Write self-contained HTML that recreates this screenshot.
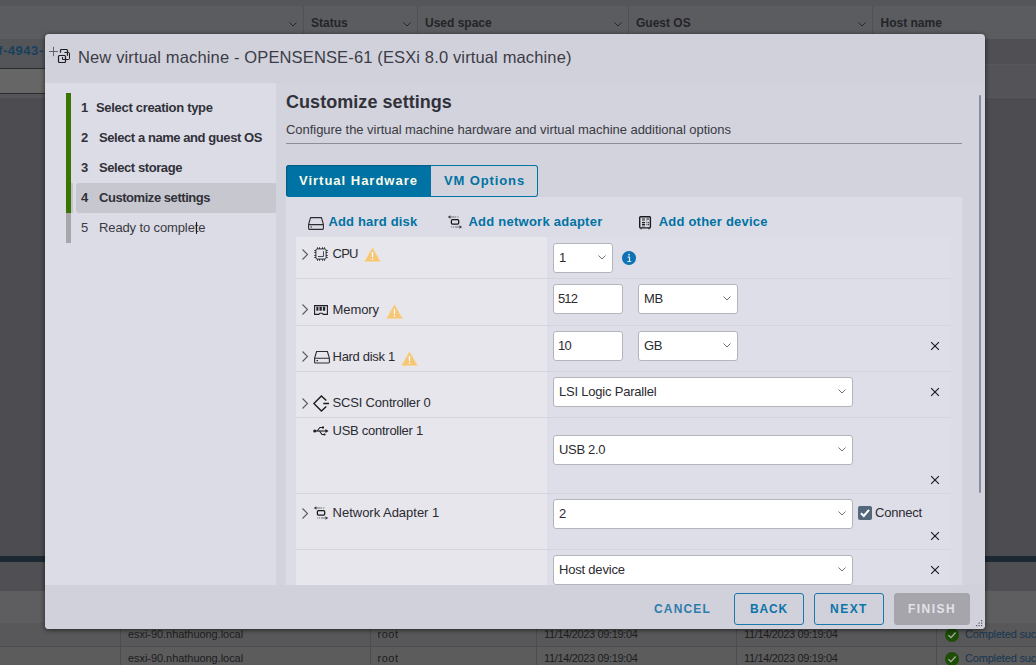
<!DOCTYPE html>
<html lang="en">
<head>
<meta charset="utf-8">
<title>New virtual machine - OPENSENSE-61</title>
<style>
*{box-sizing:border-box;margin:0;padding:0}
html,body{width:1036px;height:665px;overflow:hidden}
body{position:relative;background:#4d4d51;font-family:"Liberation Sans",sans-serif;font-size:13px;color:#2b2b31}
.abs,.abs>*{position:absolute}
.t{position:absolute;white-space:pre;line-height:16px}
/* ---------- background page (dimmed) ---------- */
#bg{position:absolute;left:0;top:0;width:1036px;height:665px}
#bg div{position:absolute}
.bgth{font-weight:700;font-size:12px;color:#232428;letter-spacing:0}
.bgtd{font-size:11px;color:#1d1d20;letter-spacing:-.05px}
/* ---------- modal ---------- */
#modal{position:absolute;left:45px;top:34px;width:940px;height:595px;background:#d1d1db;border-radius:4px;box-shadow:0 1px 5px rgba(0,0,0,.6);overflow:hidden}
#modal>div{position:absolute}
#sidebar{left:0;top:49px;width:231px;height:502px;background:#dcdce6}
#content{left:231px;top:49px;width:709px;height:502px;background:#d3d3dd}
#panel{left:241px;top:163px;width:676px;height:388px;background:#dcdce6}
#tbl{position:absolute;left:251px;top:203px;width:655px;height:348px;background:#dedee8;overflow:hidden}
#tbl .lc{position:absolute;left:0;top:0;width:251px;height:348px;background:#e6e6ec}
#tbl .ln{position:absolute;left:0;width:655px;height:1px;background:#d5d5de}
.inp{position:absolute;height:30px;background:#fff;border:1px solid #b4b4bb;border-radius:3px;font-size:13px;line-height:28px;padding-left:5px;color:#2b2b31;white-space:pre}
.chev{position:absolute;width:8px;height:5px}
.x{position:absolute;width:8px;height:8px}
.btn{position:absolute;top:559px;height:32px;border:1px solid #1a78ab;border-radius:3px;color:#0c74a8;font-weight:700;font-size:12px;line-height:30px;text-align:center;white-space:pre}
svg{position:absolute;overflow:visible}
</style>
</head>
<body>

<!-- ================= dimmed page behind the dialog ================= -->
<div id="bg">
  <div style="left:0;top:0;width:1036px;height:6px;background:#55565a"></div>
  <div style="left:0;top:6px;width:1036px;height:33px;background:#5b5c60"></div>
  <div style="left:303px;top:6px;width:1px;height:33px;background:#505155"></div>
  <div style="left:417px;top:6px;width:1px;height:33px;background:#505155"></div>
  <div style="left:628px;top:6px;width:1px;height:33px;background:#505155"></div>
  <div style="left:872px;top:6px;width:1px;height:33px;background:#505155"></div>
  <div class="t bgth" style="left:311px;top:15px">Status</div>
  <div class="t bgth" style="left:425px;top:15px">Used space</div>
  <div class="t bgth" style="left:636px;top:15px">Guest OS</div>
  <div class="t bgth" style="left:880.500px;top:15px">Host name</div>
  <svg style="left:289px;top:22px" width="8" height="5" viewBox="0 0 8 5"><path d="M.5.5 4 4 7.5.5" fill="none" stroke="#26272b" stroke-width="1"/></svg>
  <svg style="left:403px;top:22px" width="8" height="5" viewBox="0 0 8 5"><path d="M.5.5 4 4 7.5.5" fill="none" stroke="#26272b" stroke-width="1"/></svg>
  <svg style="left:614px;top:22px" width="8" height="5" viewBox="0 0 8 5"><path d="M.5.5 4 4 7.5.5" fill="none" stroke="#26272b" stroke-width="1"/></svg>
  <svg style="left:858px;top:22px" width="8" height="5" viewBox="0 0 8 5"><path d="M.5.5 4 4 7.5.5" fill="none" stroke="#26272b" stroke-width="1"/></svg>

  <div style="left:0;top:39px;width:1036px;height:25px;background:#4f4f54"></div>
  <div style="left:0;top:64px;width:1036px;height:34px;background:#535358"></div>
  <div style="left:0;top:64px;width:1036px;height:1px;background:#57575b"></div>
  <div style="left:0;top:97px;width:1036px;height:1px;background:#58585c"></div>
  <div style="left:0;top:98px;width:1036px;height:458px;background:#4d4d51"></div>
  <div style="left:0;top:39px;width:45px;height:29px;background:#545559"></div>
  <div class="t" style="left:-2px;top:43px;font-weight:700;font-size:13px;color:#17405e;letter-spacing:.55px">f-4943-</div>
  <div style="left:0;top:68px;width:45px;height:1px;background:#2b2b2f"></div>
  <div style="left:0;top:69px;width:45px;height:24px;background:#666667"></div>
  <div style="left:0;top:93px;width:45px;height:1px;background:#2b2b2f"></div>
  <div style="left:0;top:94px;width:45px;height:462px;background:#4d4d51"></div>
  <div style="left:0;top:94px;width:45px;height:4px;background:#56565a"></div>

  <div style="left:0;top:556px;width:1036px;height:6px;background:#1c2932"></div>
  <div style="left:0;top:562px;width:1036px;height:29px;background:#4f4f54"></div>
  <div style="left:0;top:591px;width:1036px;height:32px;background:#5e5e60"></div>
  <div style="left:0;top:623px;width:1036px;height:23px;background:#58585a"></div>
  <div style="left:0;top:646.500px;width:1036px;height:19px;background:#5c5c5d"></div>
  <div style="left:120px;top:623px;width:1px;height:42px;background:#4c4c4e"></div>
  <div style="left:370px;top:623px;width:1px;height:42px;background:#4c4c4e"></div>
  <div style="left:536px;top:623px;width:1px;height:42px;background:#4c4c4e"></div>
  <div style="left:736px;top:623px;width:1px;height:42px;background:#4c4c4e"></div>
  <div style="left:936px;top:623px;width:1px;height:42px;background:#4c4c4e"></div>
  <div class="t bgtd" style="left:128px;top:626px">esxi-90.nhathuong.local</div>
  <div class="t bgtd" style="left:128px;top:650px">esxi-90.nhathuong.local</div>
  <div class="t bgtd" style="left:377.500px;top:626px;letter-spacing:.5px">root</div>
  <div class="t bgtd" style="left:377.500px;top:650px;letter-spacing:.5px">root</div>
  <div class="t bgtd" style="left:544px;top:626px;letter-spacing:-.35px">11/14/2023 09:19:04</div>
  <div class="t bgtd" style="left:544px;top:650px;letter-spacing:-.35px">11/14/2023 09:19:04</div>
  <div class="t bgtd" style="left:744px;top:626px;letter-spacing:-.35px">11/14/2023 09:19:04</div>
  <div class="t bgtd" style="left:744px;top:650px;letter-spacing:-.35px">11/14/2023 09:19:04</div>
  <svg style="left:945px;top:628px" width="14" height="14" viewBox="0 0 14 14"><circle cx="7" cy="7" r="7" fill="#1d4d06"/><path d="M3.400 7.200 6 9.700 10.600 4.500" fill="none" stroke="#a9b3a6" stroke-width="1.200"/></svg>
  <svg style="left:945px;top:652px" width="14" height="14" viewBox="0 0 14 14"><circle cx="7" cy="7" r="7" fill="#1d4d06"/><path d="M3.400 7.200 6 9.700 10.600 4.500" fill="none" stroke="#a9b3a6" stroke-width="1.200"/></svg>
  <div class="t bgtd" style="left:965px;top:626px;color:#173650;letter-spacing:-.18px">Completed successfully</div>
  <div class="t bgtd" style="left:965px;top:650px;color:#173650;letter-spacing:-.18px">Completed successfully</div>
</div>

<!-- ================= wizard dialog ================= -->
<div id="modal">
  <!-- header -->
  <svg style="left:4px;top:12px" width="32" height="22" viewBox="0 0 32 22"><g fill="none" stroke="#1d1d23" stroke-width="1.200"><path d="M0 5.500h9M4.500.800v9.400" stroke="#55555d" stroke-width=".9"/><path d="M11.500 6.800V4.400a.9.900 0 0 1 .9-.9h5.200a.9.900 0 0 1 .9.900v5.400"/><path d="M15.400 6.500h4.300a.8.800 0 0 1 .8.800v5.400a.8.800 0 0 1-.8.800h-2.700" stroke-width="1"/><rect x="9.500" y="9.500" width="7" height="7" rx=".9"/><path d="M13.500 11v2.500h2.500" stroke-width="1"/></g></svg>
  <div class="t" style="left:33px;top:12px;font-size:16.5px;line-height:22px;color:#3c3c46;letter-spacing:.14px">New virtual machine - OPENSENSE-61 (ESXi 8.0 virtual machine)</div>

  <!-- step navigation -->
  <div id="sidebar">
    <div style="position:absolute;left:21px;top:10px;width:5px;height:120px;background:#3b7500"></div>
    <div style="position:absolute;left:21px;top:130px;width:5px;height:30px;background:#a6a6ac"></div>
    <div style="position:absolute;left:26px;top:100px;width:2px;height:30px;background:#c4c4cc"></div>
    <div style="position:absolute;left:31px;top:100px;width:200px;height:30px;background:#c7c7cf;border-radius:3px 0 0 3px"></div>
    <div class="t" style="left:36px;top:17px;font-weight:700;color:#313139;letter-spacing:-.3px">1</div>
    <div class="t" style="left:51px;top:17px;font-weight:700;color:#313139;letter-spacing:-.31px">Select creation type</div>
    <div class="t" style="left:36px;top:47px;font-weight:700;color:#313139">2</div>
    <div class="t" style="left:54px;top:47px;font-weight:700;color:#313139;letter-spacing:-.43px">Select a name and guest OS</div>
    <div class="t" style="left:36px;top:77px;font-weight:700;color:#313139">3</div>
    <div class="t" style="left:54px;top:77px;font-weight:700;color:#313139;letter-spacing:-.42px">Select storage</div>
    <div class="t" style="left:36px;top:107px;font-weight:700;color:#313139">4</div>
    <div class="t" style="left:54px;top:107px;font-weight:700;color:#313139;letter-spacing:-.45px">Customize settings</div>
    <div class="t" style="left:36px;top:137px;color:#3a3a42">5</div>
    <div class="t" style="left:54px;top:137px;color:#3a3a42;letter-spacing:-.12px">Ready to complete</div>
    <div style="position:absolute;left:150.500px;top:139px;width:1px;height:12px;background:#1a1a1e"></div>
  </div>

  <!-- main content -->
  <div id="content"></div>
  <div class="t" style="left:241px;top:57px;font-size:18px;line-height:22px;font-weight:700;color:#313139;letter-spacing:.05px">Customize settings</div>
  <div class="t" style="left:241px;top:87.500px;color:#3a3a42;letter-spacing:-.04px">Configure the virtual machine hardware and virtual machine additional options</div>
  <div style="left:241px;top:109px;width:676px;height:1px;background:#8e8e98"></div>

  <!-- tabs -->
  <div style="left:241px;top:131px;width:145px;height:32px;background:#0072a3;border-radius:3px 0 0 3px;box-shadow:inset 1px 1px 1px rgba(0,45,75,.35)"></div>
  <div class="t" style="left:254px;top:139px;font-weight:700;color:#fbfbe9;letter-spacing:.99px">Virtual Hardware</div>
  <div style="left:386px;top:131px;width:107px;height:32px;border:1px solid #0072a3;border-left:0;border-radius:0 3px 3px 0"></div>
  <div class="t" style="left:399px;top:139px;font-weight:700;color:#0072a3;letter-spacing:.88px">VM Options</div>

  <div id="panel"></div>

  <!-- toolbar -->
  <svg style="left:263px;top:183px" width="16" height="13" viewBox="0 0 16 13"><path d="M2.600.600h10.800l2 6.800v4.200a.800.800 0 0 1-.8.800H1.400a.800.800 0 0 1-.8-.8V7.400zM.800 7.600h14.400M2.500 10h1.500" fill="none" stroke="#2b2b31" stroke-width="1.100"/></svg>
  <div class="t" style="left:283.400px;top:180px;font-weight:700;color:#0072a3;letter-spacing:.18px">Add hard disk</div>
  <svg style="left:402px;top:181px" width="16" height="14" viewBox="0 0 16 14"><g fill="none"><path d="M3.500 2h4.200" stroke="#6e6e76" stroke-width="1"/><path d="M8 2h4" stroke="#6e6e76" stroke-width="1" stroke-dasharray="1 .8"/><path d="M.800 2l2.700-1.700v3.400z" fill="#3a3a42"/><rect x="4.400" y="4.700" width="7.300" height="4.400" rx="1.100" stroke="#16161a" stroke-width="1.250"/><path d="M8.200 12h4.300" stroke="#6e6e76" stroke-width="1"/><path d="M4.200 12h4" stroke="#6e6e76" stroke-width="1" stroke-dasharray="1 .8"/><path d="M15.200 12l-2.700-1.700v3.400z" fill="#3a3a42"/></g></svg>
  <div class="t" style="left:423.400px;top:180px;font-weight:700;color:#0072a3;letter-spacing:.25px">Add network adapter</div>
  <svg style="left:594px;top:182px" width="12" height="14" viewBox="0 0 12 14"><g fill="none" stroke="#1b1b1f"><rect x=".700" y=".700" width="10.700" height="11.200" rx=".800" stroke-width="1.400"/><path d="M2.200 12.300v1M9.900 12.300v1" stroke-width="1.400"/><path d="M3 3h3M7.400 3h2.600" stroke-width="1.100"/><path d="M3 4.600h3M3 10.200h3M7.800 4.400v1" stroke="#77777f" stroke-width="1"/><path d="M3 6.600h3M3 8.600h3" stroke-width="1.300"/><path d="M7.400 6.600h1M9 6.600h1M7.400 8.600h1M9 8.600h1" stroke="#3a3a42" stroke-width="1.100"/></g></svg>
  <div class="t" style="left:613.700px;top:180px;font-weight:700;color:#0072a3;letter-spacing:.22px">Add other device</div>

  <!-- hardware table -->
  <div id="tbl">
    <div class="lc"></div>
    <div class="ln" style="top:41px"></div>
    <div class="ln" style="top:88px"></div>
    <div class="ln" style="top:134px"></div>
    <div class="ln" style="top:180px"></div>
    <div class="ln" style="top:256px"></div>
    <div class="ln" style="top:312px"></div>
  </div>
  <div id="rows" style="left:0;top:0">
    <!-- CPU -->
    <svg style="left:257px;top:215px" width="6" height="11" viewBox="0 0 6 11"><path d="M.5.5 5.500 5.500.5 10.500" fill="none" stroke="#5a5a64" stroke-width="1.1"/></svg>
    <svg style="left:269px;top:213px" width="14" height="14" viewBox="0 0 14 14"><g fill="none" stroke="#2b2b31" stroke-width="1"><rect x="1.900" y="1.900" width="10.200" height="10.200" rx="1.500"/><path d="M3.500.300v1.600M5.500.300v1.600M8.500.300v1.600M10.500.300v1.600M3.500 12.100v1.600M5.500 12.100v1.600M8.500 12.100v1.600M10.500 12.100v1.600M.300 3.500h1.600M.300 5.500h1.600M.300 8.500h1.600M.300 10.500h1.600M12.100 3.500h1.600M12.100 5.500h1.600M12.100 8.500h1.600M12.100 10.500h1.600"/><path d="M4 9.500h5.500V4.200" stroke="#4a4a52"/></g></svg>
    <div class="t" style="left:287.6px;top:212px;letter-spacing:-.78px">CPU</div>
    <svg class="warn" style="left:319px;top:212.700px" width="17" height="15" viewBox="0 0 17 15"><path d="M8.500.8 16.300 14.400H.7z" fill="#f4c676" stroke="#f7d596" stroke-width=".8" stroke-linejoin="round"/><path d="M8.500 5v5M8.500 11.300v1.400" stroke="#fff" stroke-width="1.300"/></svg>
    <div class="inp" style="left:508px;top:209px;width:60px">1</div>
    <svg class="chev" style="left:553px;top:220.6px" viewBox="0 0 8 5"><path d="M.5.5 4 4 7.500.5" fill="none" stroke="#6e6e76" stroke-width="1"/></svg>
    <svg style="left:577px;top:216.500px" width="14" height="14" viewBox="0 0 14 14"><circle cx="7" cy="7" r="7" fill="#0f72b5"/><path d="M5.600 6.200h1.900v4.200M5.300 10.500h3.900" fill="none" stroke="#d3e6f3" stroke-width="1.200"/><circle cx="7" cy="3.700" r=".9" fill="#d3e6f3"/></svg>

    <!-- Memory -->
    <svg style="left:257px;top:270px" width="6" height="11" viewBox="0 0 6 11"><path d="M.5.5 5.500 5.500.5 10.500" fill="none" stroke="#5a5a64" stroke-width="1.1"/></svg>
    <svg style="left:269px;top:271px" width="14" height="10" viewBox="0 0 14 10"><path d="M.600.600h12.800v8.800H9.200l-1-1.200H5.800l-1 1.200H.6z" fill="none" stroke="#1f1f25" stroke-width="1.100"/><path d="M2.400 1.700h2v4h-2zM5.500 1.700h2.300v4H5.500zM8.900 1.700h2.300v4H8.900z" fill="#1f1f25"/></svg>
    <div class="t" style="left:287.6px;top:268px;letter-spacing:-.09px">Memory</div>
    <svg class="warn" style="left:341px;top:269.700px" width="17" height="15" viewBox="0 0 17 15"><path d="M8.500.8 16.300 14.400H.7z" fill="#f4c676" stroke="#f7d596" stroke-width=".8" stroke-linejoin="round"/><path d="M8.500 5v5M8.500 11.300v1.400" stroke="#fff" stroke-width="1.300"/></svg>
    <div class="inp" style="left:508px;top:250px;width:70px;padding-left:4px;letter-spacing:-.9px">512</div>
    <div class="inp" style="left:593px;top:250px;width:100px;letter-spacing:-.4px">MB</div>
    <svg class="chev" style="left:678px;top:261.6px" viewBox="0 0 8 5"><path d="M.5.5 4 4 7.500.5" fill="none" stroke="#6e6e76" stroke-width="1"/></svg>

    <!-- Hard disk 1 -->
    <svg style="left:257px;top:317px" width="6" height="11" viewBox="0 0 6 11"><path d="M.5.5 5.500 5.500.5 10.500" fill="none" stroke="#5a5a64" stroke-width="1.1"/></svg>
    <svg style="left:269px;top:317px" width="16" height="12.500" viewBox="0 0 16 13" preserveAspectRatio="none"><path d="M2.600.600h10.800l2 6.800v4.200a.800.800 0 0 1-.8.800H1.400a.800.800 0 0 1-.8-.8V7.400zM.800 7.600h14.400M2.500 10h1.500" fill="none" stroke="#2b2b31" stroke-width="1.100"/></svg>
    <div class="t" style="left:287.6px;top:315px;letter-spacing:-.32px">Hard disk 1</div>
    <svg class="warn" style="left:356px;top:316.700px" width="17" height="15" viewBox="0 0 17 15"><path d="M8.500.8 16.300 14.400H.7z" fill="#f4c676" stroke="#f7d596" stroke-width=".8" stroke-linejoin="round"/><path d="M8.500 5v5M8.500 11.300v1.400" stroke="#fff" stroke-width="1.300"/></svg>
    <div class="inp" style="left:508px;top:297px;width:70px;padding-left:4px;letter-spacing:-.85px">10</div>
    <div class="inp" style="left:593px;top:297px;width:100px;letter-spacing:-.4px">GB</div>
    <svg class="chev" style="left:678px;top:308.6px" viewBox="0 0 8 5"><path d="M.5.5 4 4 7.500.5" fill="none" stroke="#6e6e76" stroke-width="1"/></svg>
    <svg class="x" style="left:886px;top:308px" viewBox="0 0 8 8"><path d="M.100.100l7.800 7.800M7.900.100l-7.800 7.800" stroke="#1d1d22" stroke-width="1.150"/></svg>

    <!-- SCSI Controller 0 -->
    <svg style="left:257px;top:364px" width="6" height="11" viewBox="0 0 6 11"><path d="M.5.5 5.500 5.500.5 10.500" fill="none" stroke="#5a5a64" stroke-width="1.1"/></svg>
    <svg style="left:268px;top:361px" width="16" height="17" viewBox="0 0 16 17"><path d="M13.300 5.600 8.400.9.900 8.500 8.400 16.100l4.900-4.700M10.300 8.500H16" fill="none" stroke="#1b1b1f" stroke-width="1.400"/></svg>
    <div class="t" style="left:287.6px;top:361px;letter-spacing:-.19px">SCSI Controller 0</div>
    <div class="inp" style="left:508px;top:343px;width:300px;letter-spacing:-.21px">LSI Logic Parallel</div>
    <svg class="chev" style="left:793px;top:354.6px" viewBox="0 0 8 5"><path d="M.5.5 4 4 7.500.5" fill="none" stroke="#6e6e76" stroke-width="1"/></svg>
    <svg class="x" style="left:886px;top:354px" viewBox="0 0 8 8"><path d="M.100.100l7.800 7.800M7.900.100l-7.800 7.800" stroke="#1d1d22" stroke-width="1.150"/></svg>

    <!-- USB controller 1 -->
    <svg style="left:268px;top:392px" width="16" height="10" viewBox="0 0 16 10"><g fill="none" stroke="#1d1d22" stroke-width="1.100"><path d="M1.500 5H13"/><path d="M4 5l3-3.500h2.500M6.500 5l2.500 3.500h2.500"/></g><circle cx="1.700" cy="5" r="1.500" fill="#1d1d22"/><path d="M12.500 3l3 2-3 2z" fill="#1d1d22"/><rect x="9" y=".5" width="2" height="2" fill="#1d1d22"/><circle cx="11.500" cy="8.500" r="1.100" fill="#1d1d22"/></svg>
    <div class="t" style="left:287.6px;top:389px;letter-spacing:-.27px">USB controller 1</div>
    <div class="inp" style="left:508px;top:401px;width:300px;letter-spacing:-.32px">USB 2.0</div>
    <svg class="chev" style="left:793px;top:412.6px" viewBox="0 0 8 5"><path d="M.5.5 4 4 7.500.5" fill="none" stroke="#6e6e76" stroke-width="1"/></svg>
    <svg class="x" style="left:886px;top:442px" viewBox="0 0 8 8"><path d="M.100.100l7.800 7.800M7.900.100l-7.800 7.800" stroke="#1d1d22" stroke-width="1.150"/></svg>

    <!-- Network Adapter 1 -->
    <svg style="left:257px;top:474px" width="6" height="11" viewBox="0 0 6 11"><path d="M.5.5 5.500 5.500.5 10.500" fill="none" stroke="#5a5a64" stroke-width="1.1"/></svg>
    <svg style="left:268px;top:472px" width="16" height="14" viewBox="0 0 16 14"><g fill="none"><path d="M3.500 2h4.200" stroke="#6e6e76" stroke-width="1"/><path d="M8 2h4" stroke="#6e6e76" stroke-width="1" stroke-dasharray="1 .8"/><path d="M.800 2l2.700-1.700v3.400z" fill="#3a3a42"/><rect x="4.400" y="4.700" width="7.300" height="4.400" rx="1.100" stroke="#16161a" stroke-width="1.250"/><path d="M8.200 12h4.300" stroke="#6e6e76" stroke-width="1"/><path d="M4.200 12h4" stroke="#6e6e76" stroke-width="1" stroke-dasharray="1 .8"/><path d="M15.200 12l-2.700-1.700v3.400z" fill="#3a3a42"/></g></svg>
    <div class="t" style="left:287.6px;top:471px;letter-spacing:-.02px">Network Adapter 1</div>
    <div class="inp" style="left:508px;top:465px;width:300px">2</div>
    <svg class="chev" style="left:793px;top:476.6px" viewBox="0 0 8 5"><path d="M.5.5 4 4 7.500.5" fill="none" stroke="#6e6e76" stroke-width="1"/></svg>
    <div style="position:absolute;left:813px;top:472px;width:14px;height:14px;background:#53677a;border-radius:2px"></div>
    <svg style="left:813px;top:472px" width="14" height="14" viewBox="0 0 14 14"><path d="M3 7.200 5.800 10 11 3.800" fill="none" stroke="#fff" stroke-width="2"/></svg>
    <div class="t" style="left:830px;top:471px;letter-spacing:-.23px">Connect</div>
    <svg class="x" style="left:886px;top:498px" viewBox="0 0 8 8"><path d="M.100.100l7.800 7.800M7.900.100l-7.800 7.800" stroke="#1d1d22" stroke-width="1.150"/></svg>

    <!-- CD/DVD row (partially visible) -->
    <div class="inp" style="left:508px;top:521px;width:300px;letter-spacing:-.2px">Host device</div>
    <svg class="chev" style="left:793px;top:532.6px" viewBox="0 0 8 5"><path d="M.5.5 4 4 7.500.5" fill="none" stroke="#6e6e76" stroke-width="1"/></svg>
    <svg class="x" style="left:886px;top:532px" viewBox="0 0 8 8"><path d="M.100.100l7.800 7.800M7.900.100l-7.800 7.800" stroke="#1d1d22" stroke-width="1.150"/></svg>
  </div>

  <!-- scrollbar -->
  <div style="left:934px;top:61px;width:2px;height:398px;background:#8a8aa7;border-radius:1px"></div>

  <!-- footer -->
  <div id="footer" style="left:0;top:551px;width:940px;height:44px;background:#d1d1db"></div>
  <div class="t" style="left:609px;top:567px;font-weight:700;font-size:12px;color:#2f7cab;letter-spacing:1.17px">CANCEL</div>
  <div class="btn" style="left:689px;width:70px;letter-spacing:.88px">BACK</div>
  <div class="btn" style="left:769px;width:70px;letter-spacing:1.45px">NEXT</div>
  <div class="btn" style="left:849px;width:76px;letter-spacing:1.48px;background:#a5a5ab;border-color:#a5a5ab;color:#e2e2e9">FINISH</div>
  <svg style="left:931px;top:586px" width="7" height="7" viewBox="0 0 7 7"><g fill="#55555f"><rect x="5" y="0" width="1.200" height="1.200"/><rect x="2.500" y="2.500" width="1.200" height="1.200"/><rect x="5" y="2.500" width="1.200" height="1.200"/><rect x="0" y="5" width="1.200" height="1.200"/><rect x="2.500" y="5" width="1.200" height="1.200"/><rect x="5" y="5" width="1.200" height="1.200"/></g></svg>
</div>

</body>
</html>
